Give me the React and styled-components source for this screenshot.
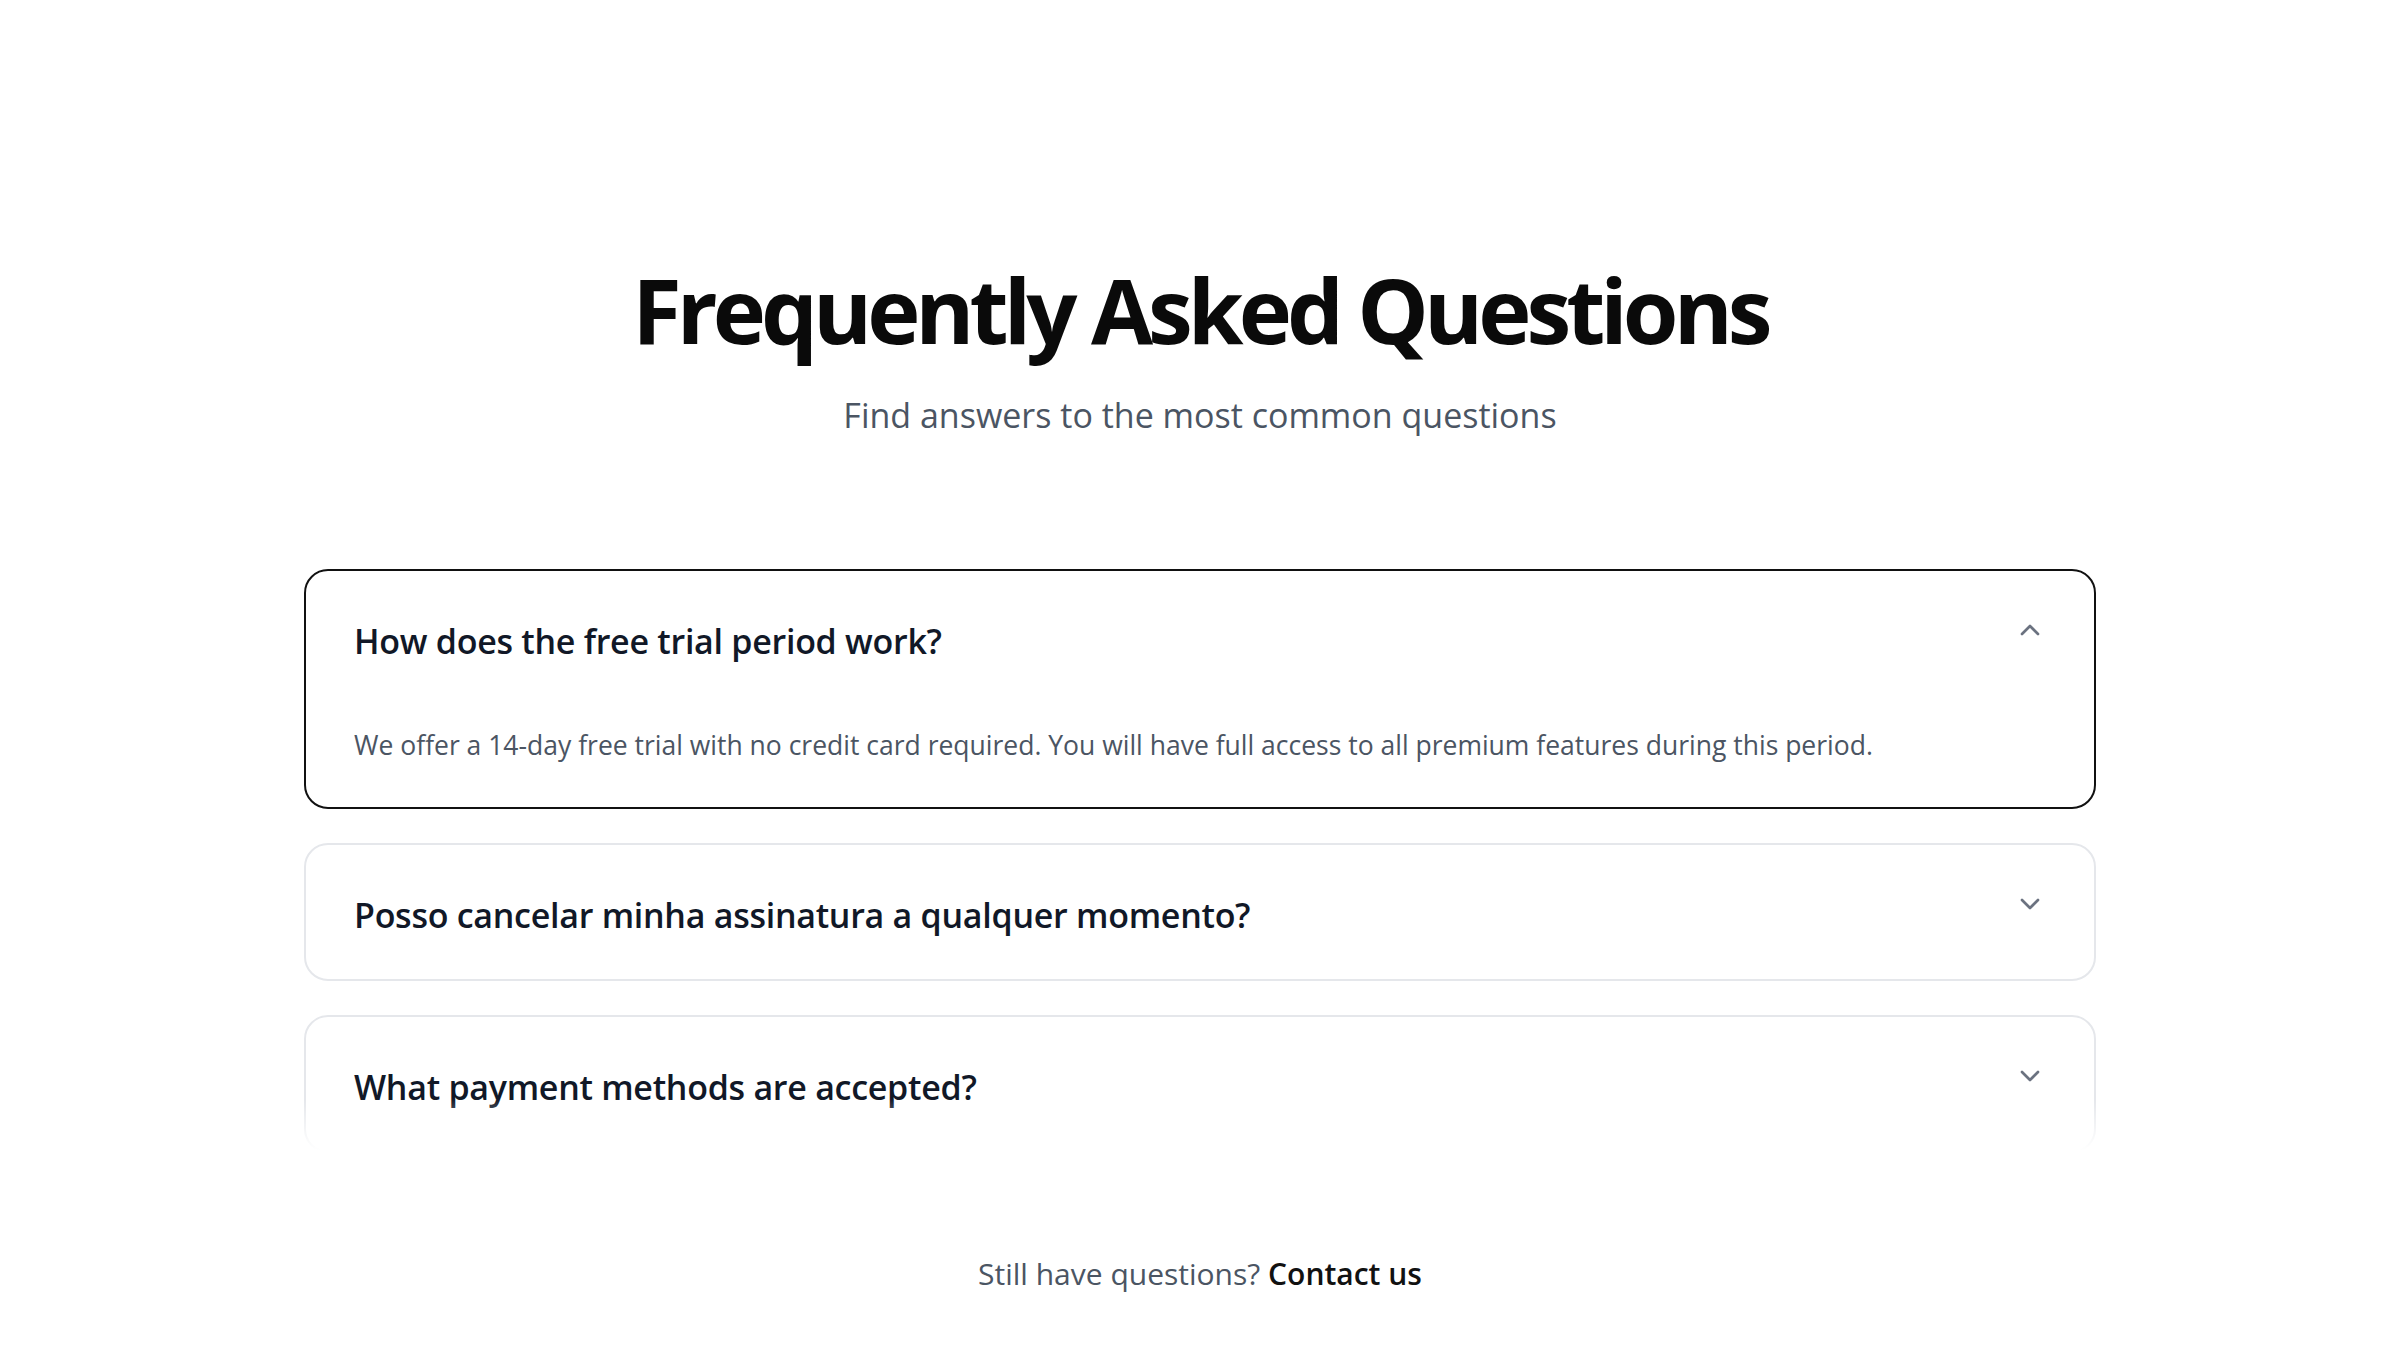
import React, { useState } from "react";
import styled, { createGlobalStyle } from "styled-components";
import { ChevronDown, ChevronUp } from "lucide-react";

const Global = createGlobalStyle`
  html, body { margin: 0; padding: 0; background: #ffffff; }
  body { font-family: "Open Sans", "Noto Sans", sans-serif; -webkit-font-smoothing: antialiased; }
  * { box-sizing: border-box; }
`;

const Page = styled.main`
  display: flex;
  flex-direction: column;
  align-items: center;
  padding: 256px 0 80px;
  min-height: 1350px;
`;

const Header = styled.header`
  display: flex;
  flex-direction: column;
  align-items: center;
  gap: 29px;
`;

const Title = styled.h1`
  margin: 0;
  font-size: 90px;
  line-height: 106px;
  font-weight: 700;
  letter-spacing: -0.055em;
  color: #0a0a0a;
`;

const Subtitle = styled.p`
  margin: 0;
  font-size: 34px;
  line-height: 48px;
  color: #4b5563;
`;

const List = styled.div`
  position: relative;
  width: 1792px;
  margin-top: 130px;
  display: flex;
  flex-direction: column;
  gap: 34px;
  &::after {
    content: "";
    position: absolute;
    left: -4px;
    right: -4px;
    bottom: -2px;
    height: 56px;
    background: linear-gradient(to bottom, rgba(255,255,255,0), #ffffff 92%);
    pointer-events: none;
  }
`;

const Card = styled.div`
  border: 2px solid ${(p) => (p.$open ? "#111111" : "#e5e7eb")};
  border-radius: 24px;
  padding: 40px 48px;
  background: #fff;
`;

const QuestionRow = styled.button`
  all: unset;
  display: flex;
  align-items: flex-start;
  justify-content: space-between;
  width: 100%;
  cursor: pointer;
`;

const Question = styled.span`
  font-size: 34px;
  line-height: 54px;
  padding-top: 3px;
  margin-bottom: -3px;
  font-weight: 600;
  letter-spacing: -0.008em;
  color: #111827;
`;

const Icon = styled.span`
  display: flex;
  margin-top: 3px;
  color: #6b7280;
`;

const Answer = styled.p`
  margin: 58px 0 0;
  font-size: 26.5px;
  line-height: 44px;
  color: #4b5563;
`;

const Footer = styled.p`
  margin: 97px 0 0;
  font-size: 30px;
  line-height: 48px;
  color: #4b5563;
`;

const Link = styled.a`
  color: #111111;
  font-weight: 600;
  text-decoration: none;
`;

const faqs = [
  {
    q: "How does the free trial period work?",
    a: "We offer a 14-day free trial with no credit card required. You will have full access to all premium features during this period.",
  },
  {
    q: "Posso cancelar minha assinatura a qualquer momento?",
    a: "Sim, você pode cancelar a qualquer momento sem taxas adicionais.",
  },
  {
    q: "What payment methods are accepted?",
    a: "We accept all major credit cards, PayPal and bank transfers.",
  },
];

export default function App() {
  const [open, setOpen] = useState(0);
  return (
    <>
      <Global />
      <Page>
        <Header>
          <Title>Frequently Asked Questions</Title>
          <Subtitle>Find answers to the most common questions</Subtitle>
        </Header>
        <List>
          {faqs.map((f, i) => (
            <Card key={i} $open={open === i}>
              <QuestionRow onClick={() => setOpen(open === i ? -1 : i)}>
                <Question>{f.q}</Question>
                <Icon>
                  {open === i ? (
                    <ChevronUp size={32} strokeWidth={2} />
                  ) : (
                    <ChevronDown size={32} strokeWidth={2} />
                  )}
                </Icon>
              </QuestionRow>
              {open === i && <Answer>{f.a}</Answer>}
            </Card>
          ))}
        </List>
        <Footer>
          Still have questions? <Link href="#">Contact us</Link>
        </Footer>
      </Page>
    </>
  );
}
